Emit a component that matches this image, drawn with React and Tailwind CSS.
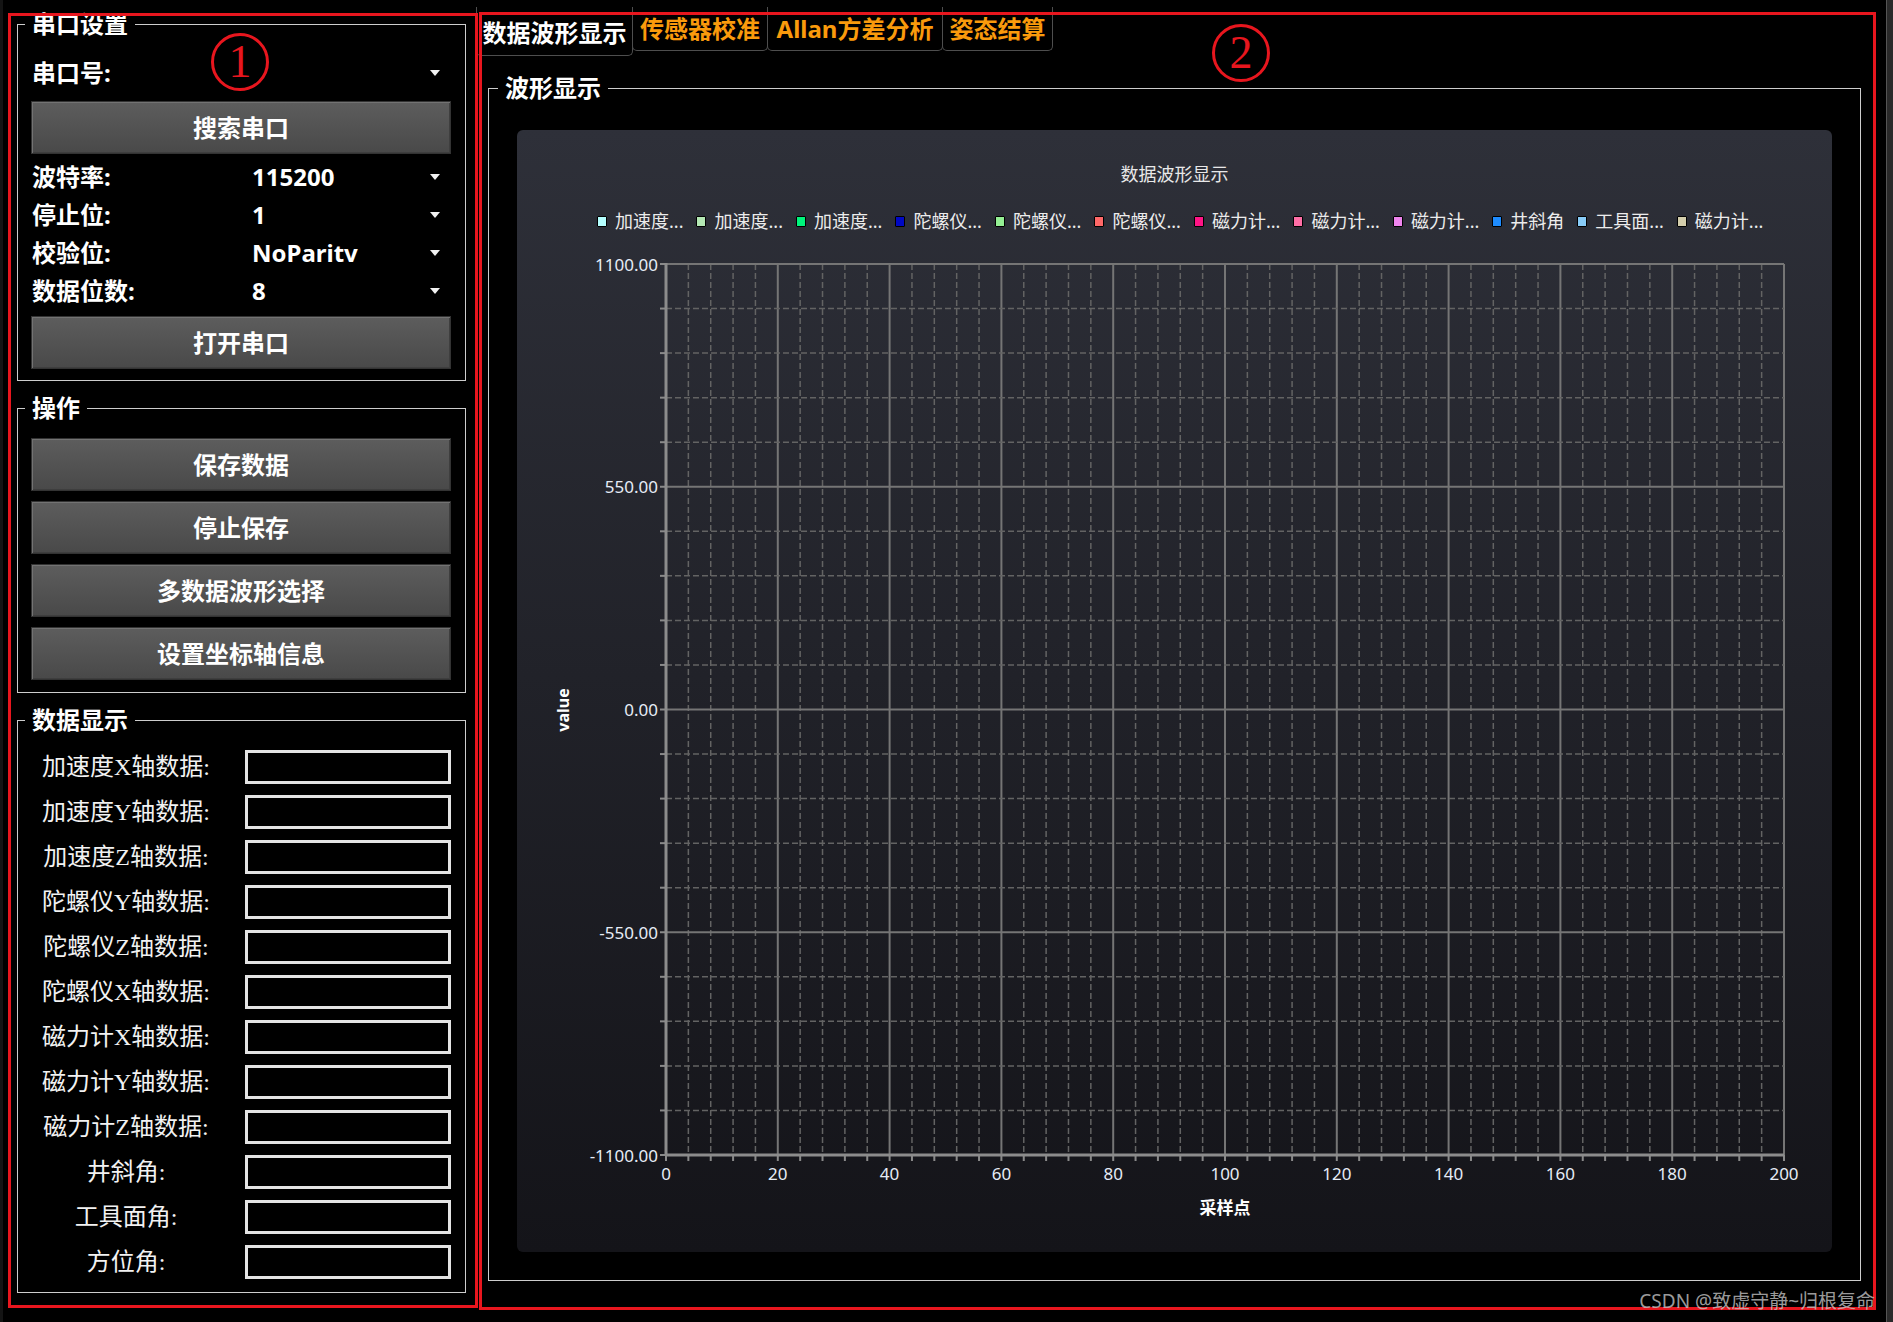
import React from "react";

const SANS = "font-['Noto_Sans','Noto_Sans_CJK_SC',sans-serif]";
const SERIF = "font-['Liberation_Serif','Noto_Sans_CJK_SC',serif]";

const comboRows = [
  ["波特率:", "115200"],
  ["停止位:", "1"],
  ["校验位:", "NoParity"],
  ["数据位数:", "8"],
];

const actionButtons = ["保存数据", "停止保存", "多数据波形选择", "设置坐标轴信息"];

const dataRows = [
  "加速度X轴数据:",
  "加速度Y轴数据:",
  "加速度Z轴数据:",
  "陀螺仪Y轴数据:",
  "陀螺仪Z轴数据:",
  "陀螺仪X轴数据:",
  "磁力计X轴数据:",
  "磁力计Y轴数据:",
  "磁力计Z轴数据:",
  "井斜角:",
  "工具面角:",
  "方位角:",
];

const legendItems = [
  ["加速度...", "#b4ffff"],
  ["加速度...", "#b4e8b4"],
  ["加速度...", "#00f47c"],
  ["陀螺仪...", "#0008c4"],
  ["陀螺仪...", "#94f094"],
  ["陀螺仪...", "#ff6868"],
  ["磁力计...", "#ff1486"],
  ["磁力计...", "#ff6ea6"],
  ["磁力计...", "#ee84ee"],
  ["井斜角", "#1e8cff"],
  ["工具面...", "#88ccf8"],
  ["磁力计...", "#d4ceac"],
];

const tabs = [
  { label: "数据波形显示", width: "w-[157px]", active: true },
  { label: "传感器校准", width: "w-[136px]" },
  { label: "Allan方差分析", width: "w-[176px]" },
  { label: "姿态结算", width: "w-[111px]" },
];

function Arrow() {
  return (
    <svg width="10" height="6" viewBox="0 0 10 6" className="shrink-0">
      <polygon points="0,0 10,0 5,6" fill="#f2f2f2" />
    </svg>
  );
}

function GroupBox({ title, className = "", legendClass = "ml-[7px]", children }) {
  return (
    <fieldset className={`border border-[#cdcdcd] ${className}`}>
      <legend className={`${legendClass} px-[7px] text-[24px] font-bold leading-[30px] text-white`}>{title}</legend>
      {children}
    </fieldset>
  );
}

function GrayButton({ children, className = "" }) {
  return (
    <button className={`ml-[13px] flex h-[53px] w-[420px] items-center justify-center border border-[#333333] bg-linear-to-b from-[#5d5d5d] to-[#494949] text-[24px] font-bold text-white shadow-[inset_1px_1px_0_#737373,inset_-1px_-1px_0_#3e3e3e] ${className}`}>
      {children}
    </button>
  );
}

// the combo box clips its text at the baseline, so "NoParity" loses the tail of its y
function ComboRow({ label, value }) {
  return (
    <div className="flex h-[38px] items-center pl-[14px] pr-[25px] text-[24px] font-bold text-white">
      <span className="w-[220px] shrink-0 leading-[38px]">{label}</span>
      <div className={`flex-1 self-start leading-[38px] ${value.includes("y") ? "h-[28px] overflow-hidden" : "h-[38px]"}`}>{value}</div>
      <Arrow />
    </div>
  );
}

function Plot() {
  const x0 = 149;
  const x1 = 1267;
  const y0 = 31;
  const y1 = 922;
  const w = x1 - x0;
  const h = y1 - y0;
  const lines = [];

  for (let i = 1; i <= 50; i++) {
    const x = x0 + (w * i) / 50;
    const major = i % 5 === 0;
    lines.push(
      <line key={`v${i}`} x1={x} y1={y0} x2={x} y2={y1} stroke={major ? "#757575" : "#636363"} strokeWidth={major ? 2 : 1.5} strokeDasharray={major ? undefined : "6 3"} />
    );
  }
  for (let j = 0; j < 20; j++) {
    const y = y0 + (h * j) / 20;
    const major = j % 5 === 0;
    lines.push(
      <line key={`h${j}`} x1={x0} y1={y} x2={x1} y2={y} stroke={major ? "#757575" : "#636363"} strokeWidth={major ? 2 : 1.5} strokeDasharray={major ? undefined : "6 3"} />
    );
  }
  for (let i = 0; i <= 50; i++) {
    const x = x0 + (w * i) / 50;
    lines.push(<line key={`tx${i}`} x1={x} y1={y1} x2={x} y2={y1 + 6} stroke="#8a8a8a" strokeWidth="2" />);
  }
  for (let j = 0; j <= 20; j++) {
    const y = y0 + (h * j) / 20;
    lines.push(<line key={`ty${j}`} x1={x0 - 6} y1={y} x2={x0} y2={y} stroke="#8a8a8a" strokeWidth="2" />);
  }

  const yLabels = ["1100.00", "550.00", "0.00", "-550.00", "-1100.00"];
  const xLabels = [0, 20, 40, 60, 80, 100, 120, 140, 160, 180, 200];

  return (
    <svg width="1315" height="1019" className="block">
      {lines}
      <line x1={x0} y1={y0 - 1} x2={x0} y2={y1} stroke="#8c8c8c" strokeWidth="3" />
      <line x1={x0} y1={y1} x2={x1} y2={y1} stroke="#8c8c8c" strokeWidth="3" />
      {yLabels.map((label, k) => (
        <text key={label} x={x0 - 8} y={y0 + (h * k) / 4} textAnchor="end" dominantBaseline="central" fill="#e6ecf6" fontSize="17" fontFamily="Noto Sans, sans-serif">
          {label}
        </text>
      ))}
      {xLabels.map((v, k) => (
        <text key={v} x={x0 + (w * k) / 10} y={y1 + 18} textAnchor="middle" dominantBaseline="central" fill="#e6ecf6" fontSize="17" fontFamily="Noto Sans, sans-serif">
          {v}
        </text>
      ))}
      <text x={x0 + w / 2} y={973} textAnchor="middle" dominantBaseline="central" fill="#ffffff" fontSize="17" fontWeight="700" fontFamily="Noto Sans CJK SC, sans-serif">
        采样点
      </text>
      <text x={46} y={477} textAnchor="middle" dominantBaseline="central" fill="#ffffff" fontSize="16" fontWeight="700" fontFamily="Noto Sans, sans-serif" transform="rotate(-90 46 477)">
        value
      </text>
    </svg>
  );
}

function Chart() {
  return (
    <div className="flex h-[1122px] w-[1315px] flex-col rounded-[6px] bg-linear-to-b from-[#2e3039] to-[#141419]">
      <div className="mt-[32px] text-center text-[18px] leading-[24px] text-[#e8e8e8]">数据波形显示</div>
      <div className="mt-[23px] flex h-[24px] items-center pl-[80px]">
        {legendItems.map(([label, color], i) => (
          <div key={i} className="mr-[13px] flex items-center">
            <span className="h-[11px] w-[10px] rounded-[1px] border border-black" style={{ backgroundColor: color }} />
            <span className="ml-[8px] text-[18px] leading-[24px] text-[#ececec]">{label}</span>
          </div>
        ))}
      </div>
      <Plot />
    </div>
  );
}

function CircledNumber({ n, className }) {
  return (
    <div className={`absolute flex h-[58px] w-[58px] items-center justify-center rounded-full border-[3px] border-[#e8161e] ${SERIF} text-[46px] leading-none text-[#e8161e] ${className}`}>
      {n}
    </div>
  );
}

export default function App() {
  return (
    <div className={`relative flex h-[1322px] w-[1893px] overflow-hidden bg-black ${SANS}`}>
      <div className="w-[3px] shrink-0 bg-[#141414]" />

      {/* left panel */}
      <div className="ml-[14px] flex w-[449px] shrink-0 flex-col">
        <GroupBox title="串口设置" className="mt-[9px]">
          <div className="pb-[11px] pt-[15px]">
            <ComboRow label="串口号:" value="" />
            <GrayButton className="mt-[9px]">搜索串口</GrayButton>
            <div className="mt-[4px]">
              {comboRows.map(([label, value]) => (
                <ComboRow key={label} label={label} value={value} />
              ))}
            </div>
            <GrayButton className="mt-[6px]">打开串口</GrayButton>
          </div>
        </GroupBox>

        <GroupBox title="操作" className="mt-[12px]">
          <div className="flex flex-col gap-[10px] pb-[12px] pt-[15px]">
            {actionButtons.map((label) => (
              <GrayButton key={label}>{label}</GrayButton>
            ))}
          </div>
        </GroupBox>

        <GroupBox title="数据显示" className="mt-[12px]">
          <div className="pb-[8px] pt-[9px]">
            {dataRows.map((label) => (
              <div key={label} className="flex h-[45px] items-center">
                <span className={`ml-[14px] w-[188px] text-center text-[24px] leading-[30px] text-[#f2f2f2] ${SERIF}`}>{label}</span>
                <div className="ml-[25px] h-[34px] w-[206px] border-[3px] border-[#e4e4e4] bg-black" />
              </div>
            ))}
          </div>
        </GroupBox>
      </div>

      {/* right panel */}
      <div className="ml-[10px] flex w-[1385px] shrink-0 flex-col">
        <div className="mt-[7px] flex items-start">
          {tabs.map((tab, i) => (
            <div
              key={tab.label}
              className={`${tab.width} ${i > 0 ? "-ml-px" : ""} ${tab.active ? "h-[49px] pt-[3px] text-white" : "h-[44px] text-[#fa9a0c]"} flex items-center justify-center rounded-b-[5px] border border-t-0 border-[#4e4e4e] text-[24px] font-bold`}
            >
              {tab.label}
            </div>
          ))}
        </div>

        <GroupBox title="波形显示" className="ml-[12px] mt-[17px] w-[1373px]" legendClass="ml-[9px]">
          <div className="px-[28px] pb-[28px] pt-[27px]">
            <Chart />
          </div>
        </GroupBox>
      </div>

      <div className="ml-auto w-[7px] shrink-0 border-l border-[#555] bg-[#2a2a2a]" />

      {/* annotations */}
      <div className="pointer-events-none absolute left-[8px] top-[13px] h-[1295px] w-[470px] border-[3px] border-[#e8161e]" />
      <div className="pointer-events-none absolute left-[479px] top-[12px] h-[1298px] w-[1397px] border-[3px] border-[#e8161e]" />
      <CircledNumber n="1" className="left-[211px] top-[33px]" />
      <CircledNumber n="2" className="left-[1212px] top-[24px]" />
      <div className="absolute right-[18px] top-[1288px] text-[19px] leading-[26px] text-[#c4c4c4]/80">CSDN @致虚守静~归根复命</div>
    </div>
  );
}
